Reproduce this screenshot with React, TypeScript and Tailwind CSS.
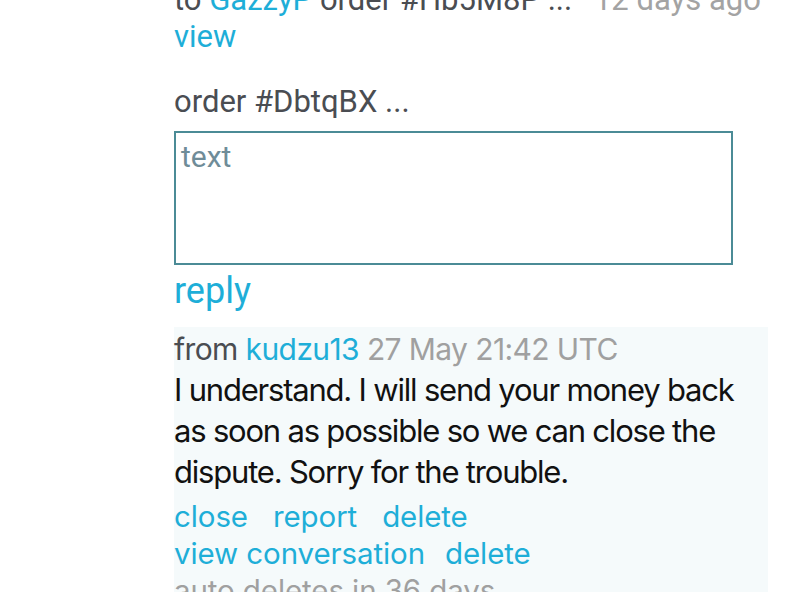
import React from "react";

const Link = ({ children, className = "" }: { children: React.ReactNode; className?: string }) => (
  <a href="#" className={`text-[#1eaed8] ${className}`}>
    {children}
  </a>
);

const App = () => {
  return (
    <div className="w-[800px] h-[592px] overflow-hidden bg-white font-['Roboto',sans-serif]">
      <div className="ml-[174px] w-[594px] -mt-[19px]">
        <div className="text-[31px] leading-[37px] text-[#4a4d52] whitespace-nowrap">
          to <Link>GazzyP</Link> order #Hb5M8P ...{" "}
          <span className="ml-[14px] text-[#a3a3a3]">12 days ago</span>
        </div>
        <div className="text-[31px] leading-[37px]">
          <Link>view</Link>
        </div>

        <div className="mt-[29px] text-[31px] leading-[36px] text-[#4a4d52]">order #DbtqBX ...</div>

        <textarea
          placeholder="text"
          className="mt-[11px] block w-[559px] h-[134px] border-2 border-[#4b8b96] px-[5px] pt-[4px] pb-0 text-[30px] leading-[40px] placeholder:text-[#6f8c98] resize-none outline-none"
        />

        <div className="mt-[4px] text-[36px] leading-[44px]">
          <Link>reply</Link>
        </div>

        <div className="mt-[14px] bg-[#f5fafb] pb-10 font-['Inter',sans-serif]">
          <div className="pt-[2px] text-[30px] leading-[40px] tracking-[-0.6px] text-[#4a4d52] whitespace-nowrap">
            from <Link>kudzu13</Link> <span className="text-[#a0a0a0]">27 May 21:42 UTC</span>
          </div>
          <p className="text-[31px] leading-[41px] tracking-[-1.2px] text-[#111] pr-[20px]">
            I understand. I will send your money back as soon as possible so we can close the dispute. Sorry for the
            trouble.
          </p>
          <div className="mt-[6px] text-[29.5px] leading-[37px] tracking-[-0.1px]">
            <div className="flex gap-[25px]">
              <Link>close</Link>
              <Link>report</Link>
              <Link>delete</Link>
            </div>
            <div className="flex gap-[20px]">
              <Link>view conversation</Link>
              <Link>delete</Link>
            </div>
            <div className="text-[#a0a0a0]">auto deletes in 36 days</div>
          </div>
        </div>
      </div>
    </div>
  );
};

export default App;
